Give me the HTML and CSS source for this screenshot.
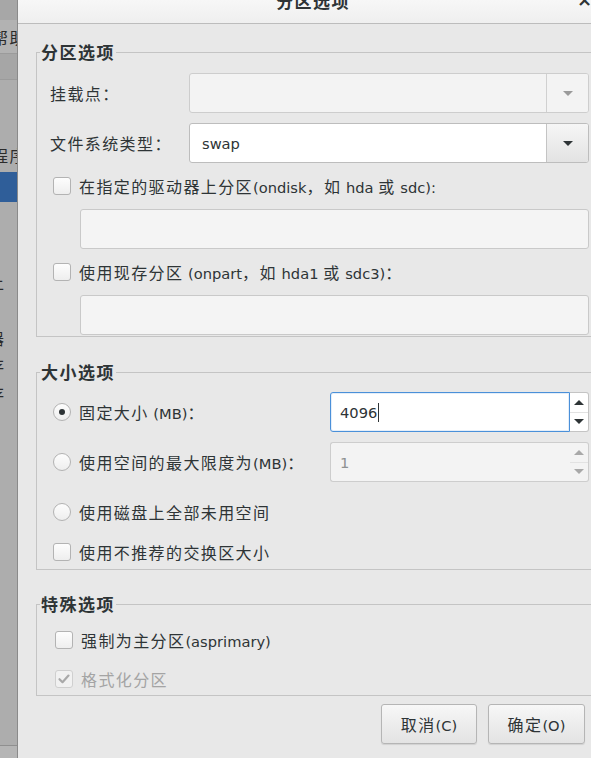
FILE: index.html
```html
<!DOCTYPE html>
<html lang="zh-CN">
<head>
<meta charset="utf-8">
<title>分区选项</title>
<link rel="stylesheet" href="styles.css">
</head>
<body>
<div class="screen">
  <aside class="side">
    <div class="s-a"></div>
    <div class="s-b"><span class="s-text cj">帮助</span></div>
    <div class="s-c"></div>
    <div class="s-row s-m63"><span class="s-text cj">程序</span></div>
    <div class="s-sel"></div>
    <div class="s-row s-m68"><span class="s-cut cj">土</span></div>
    <div class="s-row s-m32"><span class="s-cut cj">器</span></div>
    <div class="s-row s-m3"><span class="s-cut cj">存</span></div>
    <div class="s-row s-m4"><span class="s-cut cj">存</span></div>
    <div class="s-fill"></div>
    <div class="s-foot"></div>
  </aside>

  <div class="dialog">
    <header class="titlebar">
      <span class="title cj">分区选项</span>
      <span class="close">×</span>
    </header>

    <div class="body">
      <fieldset class="frame">
        <legend class="cj">分区选项</legend>
        <div class="inner inner-1">
          <div class="row field-row">
            <span class="lbl cj">挂载点：</span>
            <div class="combo combo-disabled">
              <span class="combo-text"></span>
              <span class="combo-btn"><i class="arrow-down"></i></span>
            </div>
          </div>
          <div class="row field-row">
            <span class="lbl cj">文件系统类型：</span>
            <div class="combo">
              <span class="combo-text">swap</span>
              <span class="combo-btn"><i class="arrow-down"></i></span>
            </div>
          </div>
          <div class="row check-row">
            <span class="check"></span>
            <span class="text"><span class="cj">在指定的驱动器上分区</span>(ondisk<span class="cj">，如</span> hda <span class="cj">或</span> sdc):</span>
          </div>
          <div class="entry"></div>
          <div class="row check-row">
            <span class="check"></span>
            <span class="text"><span class="cj">使用现存分区</span> (onpart<span class="cj">，如</span> hda1 <span class="cj">或</span> sdc3)<span class="cj">：</span></span>
          </div>
          <div class="entry"></div>
        </div>
      </fieldset>

      <fieldset class="frame frame-2">
        <legend class="cj">大小选项</legend>
        <div class="inner inner-2">
          <div class="row field-row">
            <span class="radio radio-on"></span>
            <span class="text"><span class="cj">固定大小</span> (MB)<span class="cj">：</span></span>
            <div class="spin">
              <div class="spin-field spin-focus">4096<span class="caret"></span></div>
              <div class="spin-btns">
                <span class="spin-up"><i class="arrow-up"></i></span>
                <span><i class="arrow-down"></i></span>
              </div>
            </div>
          </div>
          <div class="row field-row">
            <span class="radio"></span>
            <span class="text"><span class="cj">使用空间的最大限度为</span>(MB)<span class="cj">：</span></span>
            <div class="spin spin-disabled">
              <div class="spin-field">1</div>
              <div class="spin-btns">
                <span class="spin-up"><i class="arrow-up"></i></span>
                <span><i class="arrow-down"></i></span>
              </div>
            </div>
          </div>
          <div class="row field-row">
            <span class="radio"></span>
            <span class="text cj">使用磁盘上全部未用空间</span>
          </div>
          <div class="row check-row check-row-last">
            <span class="check"></span>
            <span class="text cj">使用不推荐的交换区大小</span>
          </div>
        </div>
      </fieldset>

      <fieldset class="frame frame-3">
        <legend class="cj">特殊选项</legend>
        <div class="inner inner-3">
          <div class="row check-row small">
            <span class="check"></span>
            <span class="text"><span class="cj">强制为主分区</span>(asprimary)</span>
          </div>
          <div class="row check-row small disabled">
            <span class="check check-disabled">
              <svg viewBox="0 0 16 16" width="16" height="16"><path d="M3.5 8.2l3 3 6-6.6" stroke="#a9a9a9" stroke-width="2.2" fill="none" stroke-linecap="round" stroke-linejoin="round"/></svg>
            </span>
            <span class="text cj">格式化分区</span>
          </div>
        </div>
      </fieldset>

      <div class="actions">
        <button class="btn"><span class="cj">取消</span>(C)</button>
        <button class="btn btn-ok"><span class="cj">确定</span>(O)</button>
      </div>
    </div>
  </div>
</div>
</body>
</html>
```

FILE: styles.css
```css
* { box-sizing: border-box; margin: 0; padding: 0; }

html, body {
  width: 591px;
  height: 758px;
  overflow: hidden;
}

body {
  font-family: "DejaVu Sans", "Noto Sans CJK SC", sans-serif;
  font-size: 14.67px;
  color: #2e3436;
  background: #adadad;
}

.cj {
  font-family: "Noto Sans CJK SC", "DejaVu Sans", sans-serif;
  font-size: 16px;
  letter-spacing: 1.4px;
}

.screen {
  display: flex;
  height: 758px;
}

/* left strip (window behind the dialog) */
.side {
  width: 18px;
  flex: none;
  display: flex;
  flex-direction: column;
  background: #adadad;
  border-right: 1px solid #8a8a8a;
  overflow: hidden;
  color: #2b2b2b;
  white-space: nowrap;
}
.s-a { height: 20px; background: #a7a7a7; flex: none; }
.s-b {
  height: 34px;
  flex: none;
  background: #b2b2b2;
  border-bottom: 1px solid #9b9b9b;
  display: flex;
  align-items: center;
}
.s-c { height: 26px; flex: none; background: #a6a6a6; border-bottom: 1px solid #9b9b9b; }
.s-text { margin-left: -8px; }
.s-cut { margin-left: -12px; }
.s-row { height: 24px; flex: none; display: flex; align-items: center; }
.s-m63 { margin-top: 63px; }
.s-m68 { margin-top: 68px; }
.s-m32 { margin-top: 32px; }
.s-m3 { margin-top: 3px; }
.s-m4 { margin-top: 4px; }
.s-sel { height: 30px; flex: none; margin-top: 5px; background: #2f5e99; }
.s-fill { flex: 1; }
.s-foot { height: 13px; flex: none; border-top: 1px solid #8f8f8f; background: #b5b5b5; }

/* dialog */
.dialog {
  width: 590px;
  flex: none;
  background: #e8e8e8;
  display: flex;
  flex-direction: column;
}

.titlebar {
  height: 24px;
  flex: none;
  background: linear-gradient(#f7f7f7, #efefef);
  border-bottom: 1px solid #bcbcbc;
  display: grid;
  grid-template-columns: 1fr auto 1fr;
  align-items: start;
  overflow: hidden;
}
.title {
  grid-column: 2;
  font-weight: bold;
  font-size: 17px;
  line-height: 20px;
  margin-top: -9px;
}
.close {
  grid-column: 3;
  justify-self: end;
  margin-right: 16px;
  margin-top: -10px;
  font-size: 18px;
  font-weight: bold;
  line-height: 20px;
  color: #2e3436;
}

.body {
  padding: 18px 0 0 18px;
}

.frame {
  width: 564px;
  min-width: 0;
  border: 1px solid #c4c4c4;
  padding: 0;
  margin: 0;
}
.frame legend {
  margin-left: 3px;
  padding: 0 1px;
  font-weight: bold;
  font-size: 17px;
  letter-spacing: 1.5px;
  line-height: 20px;
}
.frame-2 { margin-top: 25px; }
.frame-3 { margin-top: 24px; }

.inner {
  width: 553px;
  display: flex;
  flex-direction: column;
  padding-left: 13px;
}
.inner-1 { padding-top: 11px; padding-bottom: 1px; gap: 10px; }
.inner-2 { padding-top: 10px; padding-bottom: 5px; gap: 10px; }
.inner-3 { padding-top: 14px; padding-bottom: 4px; padding-left: 15px; gap: 15px; }

.row {
  display: flex;
  align-items: center;
  width: 539px;
}
.field-row { height: 40px; }
.check-row { height: 26px; padding-left: 3px; gap: 8px; }
.check-row.small { height: 24px; }
.check-row-last { height: 24px; margin-top: -2px; }
.inner-2 .field-row { padding-left: 3px; gap: 8px; }

.lbl { width: 139px; flex: none; }

/* combo boxes */
.combo {
  width: 400px;
  height: 40px;
  display: flex;
  border: 1px solid #bdbdbd;
  border-radius: 3px;
  background: #fff;
  overflow: hidden;
}
.combo-text {
  flex: 1;
  padding-left: 12px;
  display: flex;
  align-items: center;
}
.combo-btn {
  width: 42px;
  flex: none;
  border-left: 1px solid #c4c4c4;
  display: flex;
  align-items: center;
  justify-content: center;
  background: linear-gradient(#f6f6f6, #e3e3e3);
}
.combo-disabled {
  background: #f3f3f3;
  border-color: #cdcdcd;
}
.combo-disabled .combo-btn {
  background: #f3f3f3;
  border-left-color: #d0d0d0;
}
.combo-disabled .arrow-down { border-top-color: #9a9a9a; }

.arrow-down, .arrow-up {
  display: block;
  width: 0;
  height: 0;
  border-left: 5px solid transparent;
  border-right: 5px solid transparent;
}
.arrow-down { border-top: 5px solid #2e3436; }
.arrow-up { border-bottom: 5px solid #2e3436; }

/* checkboxes and radios */
.check {
  width: 18px;
  height: 18px;
  flex: none;
  border: 1px solid #b3b3b3;
  border-radius: 3px;
  background: linear-gradient(#fdfdfd, #eeeeee);
  display: flex;
  align-items: center;
  justify-content: center;
}
.check-disabled {
  border-color: #cfcfcf;
  background: #f1f1f1;
}
.disabled .text { color: #a4a4a4; }

.radio {
  width: 18px;
  height: 18px;
  flex: none;
  border: 1px solid #b3b3b3;
  border-radius: 50%;
  background: linear-gradient(#fdfdfd, #eeeeee);
  display: flex;
  align-items: center;
  justify-content: center;
}
.radio-on::after {
  content: "";
  width: 6px;
  height: 6px;
  border-radius: 50%;
  background: #2e3436;
}

/* text entries */
.entry {
  margin-left: 30px;
  width: 509px;
  height: 40px;
  border: 1px solid #c9c9c9;
  border-radius: 3px;
  background: #f4f4f4;
}

/* spin buttons */
.spin {
  margin-left: auto;
  width: 259px;
  height: 40px;
  flex: none;
  display: flex;
}
.spin-field {
  flex: 1;
  border: 1px solid #c4c4c4;
  border-right: none;
  border-radius: 3px 0 0 3px;
  background: #fff;
  padding-left: 9px;
  display: flex;
  align-items: center;
}
.spin-focus {
  border: 1px solid #4a90d9;
  box-shadow: inset 0 0 0 1px rgba(74, 144, 217, 0.15);
}
.caret {
  display: block;
  width: 1px;
  height: 19px;
  margin-left: 1px;
  background: #2e3436;
}
.spin-btns {
  width: 19px;
  flex: none;
  display: flex;
  flex-direction: column;
  border: 1px solid #c4c4c4;
  border-left: none;
  border-radius: 0 3px 3px 0;
  background: #fff;
}
.spin-btns span {
  flex: 1;
  display: flex;
  align-items: center;
  justify-content: center;
}
.spin-up { border-bottom: 1px solid #e2e2e2; }

.spin-disabled .spin-field {
  background: #f3f3f3;
  border-color: #cdcdcd;
  color: #8e9192;
}
.spin-disabled .spin-btns {
  background: #f3f3f3;
  border-color: #cdcdcd;
}
.spin-disabled .arrow-up { border-bottom-color: #a8a8a8; }
.spin-disabled .arrow-down { border-top-color: #a8a8a8; }

/* dialog buttons */
.actions {
  display: flex;
  justify-content: flex-end;
  gap: 11px;
  padding-right: 23px;
  margin-top: 8px;
}
.btn {
  width: 96px;
  height: 40px;
  border: 1px solid #b5b5b5;
  border-radius: 3px;
  background: linear-gradient(#f7f7f7, #e3e3e3);
  box-shadow: 0 1px 1px rgba(0, 0, 0, 0.1);
  font-family: "DejaVu Sans", "Noto Sans CJK SC", sans-serif;
  font-size: 14.67px;
  color: #2e3436;
}
.btn-ok { width: 97px; }
```
